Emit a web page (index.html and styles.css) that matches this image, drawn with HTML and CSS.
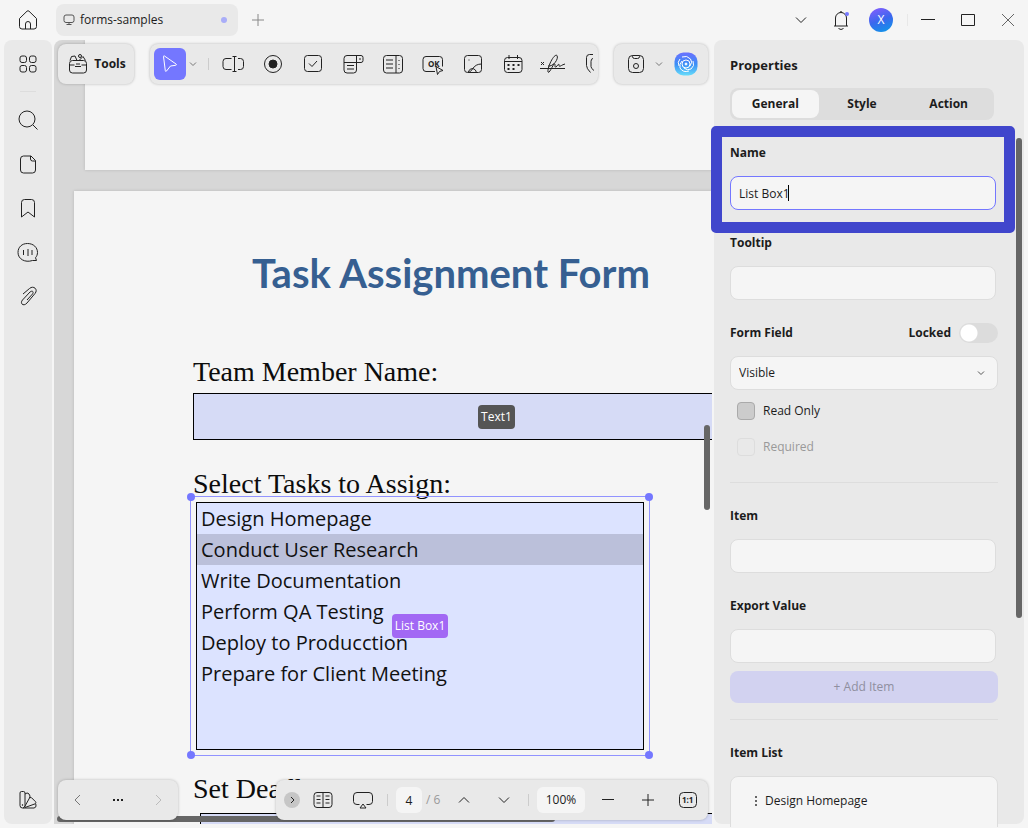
FILE: index.html
```html
<!doctype html>
<html lang="en">
	<head>
		<meta charset="utf-8">
		<title>forms-samples</title>
		<link rel="stylesheet" href="styles.css">
	</head>
	<body>
		<!-- Title bar -->
		<header>
			<button class="home" aria-label="Home"><svg width="24" height="24" viewBox="0 0 24 24"><path d="M3.5 10.5 11 3.2q1-.9 2 0l7.500 7.300v8q0 2.500-2.500 2.500H6q-2.500 0-2.500-2.500z"/><path d="M9.500 21v-5a2.500 2.500 0 0 1 5 0v5"/></svg></button>
			<div class="tab">
				<svg width="14" height="14" viewBox="0 0 14 14"><rect x="2" y="2" width="10" height="7.500" rx="2"/><path d="M7 9.500v2M4.500 11.500h5"/></svg>
				<span>forms-samples</span>
				<i class="dot"></i>
			</div>
			<button class="light" aria-label="New tab"><svg width="14" height="14" viewBox="0 0 14 14"><path d="M7 1v12M1 7h12"/></svg></button>
			<div class="windowbuttons">
				<button aria-label="More"><svg width="12" height="12" viewBox="0 0 12 12"><path d="m1 3.500 5 5 5-5"/></svg></button>
				<button aria-label="Notifications"><svg width="24" height="24" viewBox="0 0 24 24"><path d="M5 18h14M6.500 18v-8a5.500 5.500 0 0 1 11 0v8M11 4.500q1-2.500 2 0M9.500 20.500q2.500 2 5 0"/><circle class="notice" cx="18" cy="6" r="2"/></svg></button>
				<button aria-label="Account"><span class="avatar">X</span></button>
				<i class="line"></i>
				<button aria-label="Minimize"><svg width="14" height="14" viewBox="0 0 14 14"><path d="M0 6.500h14"/></svg></button>
				<button aria-label="Maximize"><svg width="14" height="14" viewBox="0 0 14 14"><rect x=".5" y="1.500" width="13" height="11"/></svg></button>
				<button class="close" aria-label="Close"><svg width="14" height="14" viewBox="0 0 14 14"><path d="m1 1 12 12M13 1 1 13"/></svg></button>
			</div>
		</header>
		<div id="app">
			<!-- Side menu -->
			<nav>
				<button aria-label="Menu"><svg width="24" height="24" viewBox="0 0 24 24"><rect x="4" y="4" width="6.500" height="6.500" rx="2"/><rect x="13.500" y="4" width="6.500" height="6.500" rx="2"/><rect x="4" y="13.500" width="6.500" height="6.500" rx="2"/><rect x="13.500" y="13.500" width="6.500" height="6.500" rx="2"/></svg></button>
				<hr>
				<button aria-label="Search"><svg width="24" height="24" viewBox="0 0 24 24"><circle cx="11" cy="11" r="8"/><path d="m17 17 4.500 4.500"/></svg></button>
				<button aria-label="Pages"><svg width="24" height="24" viewBox="0 0 24 24"><path d="M15 4H7.500q-3 0-3 3v11q0 3 3 3h9q3 0 3-3V8.500zM14.500 4v3q0 2 2 2h3"/></svg></button>
				<button aria-label="Bookmarks"><svg width="24" height="24" viewBox="0 0 24 24"><path d="M5.500 21V6.500q0-3 3-3h7q3 0 3 3V21L12 16z"/></svg></button>
				<button aria-label="Comments"><svg width="24" height="24" viewBox="0 0 24 24"><path d="M20.500 20.500h-4C9 23 2 19 2 12.500 2 7 6 3.500 11.500 3.500c6 0 10 4 10 9 0 2-.8 4-2 5.200zM7.500 10v5M12 9v7M16 10v5"/></svg></button>
				<button aria-label="Attachments"><svg width="24" height="24" viewBox="0 0 24 24"><path d="m7 10 6.500-5.500c4-3.500 9 1 5.500 5L11 19c-3.500 4-7.500.5-4.500-3l7.500-8c2.500-2 4 0 2.500 2L11 16"/></svg></button>
				<button class="last" aria-label="Theme"><svg width="24" height="24" viewBox="0 0 24 24"><path d="M4 5q0-1.500 1.500-1.500h2Q9 3.500 9 5v12.500q0 2.500-2.500 2.500T4 17.500zM9 6l2-1q1 0 2 1l1 2q0 1-.5 2L8.500 19M13.500 9.500l2 .2 4 4q.8 1 0 2L9 19.500M7 20h11q2-.5 2-2l-.2-2"/><circle cx="6.500" cy="17" r=".4"/></svg></button>
			</nav>
			<!-- Document -->
			<main>
				<article class="page previous"></article>
				<article class="page">
					<h1>Task Assignment Form</h1>
					<form>
						<label for="member">Team Member Name:</label>
						<div class="field">
							<input type="text" id="member">
							<span class="tag">Text1</span>
						</div>
						<label for="tasks">Select Tasks to Assign:</label>
						<div class="listbox">
							<select id="tasks" size="8">
								<option>Design Homepage</option>
								<option selected>Conduct User Research</option>
								<option>Write Documentation</option>
								<option>Perform QA Testing</option>
								<option>Deploy to Producction</option>
								<option>Prepare for Client Meeting</option>
							</select>
							<span class="tag purple">List Box1</span>
							<div class="selection"><i></i><i></i><i></i><i></i></div>
						</div>
						<label for="deadline">Set Deadline:</label>
						<div class="field deadline"><input type="text" id="deadline"></div>
					</form>
				</article>
				<i class="scroll vertical"></i>
				<i class="scroll horizontal"></i>

				<!-- Floating toolbars -->
				<div class="top">
					<div class="toolbar">
						<button class="tools"><svg width="24" height="24" viewBox="0 0 24 24"><rect x="3.500" y="8.500" width="17" height="12.500" rx="3"/><path d="M3.500 13h5M15.500 13h5M9 14.500h6M10 12h4M4 8.500l1.500-4 3.500-.5 2 4.500M13 8.500l4-4 2.500 4"/><circle cx="14" cy="4" r="1.500"/></svg>Tools</button>
					</div>
					<div class="toolbar fields">
						<button class="active" aria-label="Select"><svg width="24" height="24" viewBox="0 0 24 24"><path d="M5.500 4.500q0-1 1-.5L18 12q1 1-.3 1.300l-5.200.7L8.500 19q-1 1-1.200-.3z"/></svg></button>
						<button class="arrow" aria-label="Select options"><svg width="8" height="8" viewBox="0 0 8 8"><path d="m1 2.500 3 3 3-3"/></svg></button>
						<i class="line"></i>
						<button aria-label="Text field"><svg width="24" height="24" viewBox="0 0 24 24"><path d="M10.500 6.500H5q-3 0-3 3v5q0 3 3 3h5.500M17 6.500h2.500q3 0 3 3v5q0 3-3 3H17M13.500 5v14M11.500 4.500h4M11.500 19.500h4"/></svg></button>
						<button aria-label="Radio button"><svg width="24" height="24" viewBox="0 0 24 24"><circle cx="12" cy="12" r="8.500"/><circle class="fill" cx="12" cy="12" r="4"/></svg></button>
						<button aria-label="Check box"><svg width="24" height="24" viewBox="0 0 24 24"><rect x="3.500" y="3.500" width="17" height="16" rx="3"/><path d="m8 11.500 3 3 5-5.500"/></svg></button>
						<button aria-label="Dropdown"><svg width="24" height="24" viewBox="0 0 24 24"><path d="M15.500 10.500V18q0 3-3 3H6q-3 0-3-3V6.500q0-3 3-3h14q2 0 2 2v3q0 2-2 2H3M15.500 3.500v7M6 13.500h7M6 17h7M18 7h2"/></svg></button>
						<button aria-label="List box"><svg width="24" height="24" viewBox="0 0 24 24"><rect x="2.500" y="3.500" width="19" height="17.500" rx="3"/><path d="M15 3.500V21M5 8h7M5 12h7M5 16h7M18 8v1M18 12v1M18 16v1"/></svg></button>
						<button aria-label="Button"><svg width="24" height="24" viewBox="0 0 24 24"><path d="M14 19.500H5q-3 0-3-3v-9q0-3 3-3h13.500q3 0 3 3v7"/><text x="7" y="15">OK</text><path d="m15 14.500 7 4-3.500 1-2 3z"/></svg></button>
						<button aria-label="Image"><svg width="24" height="24" viewBox="0 0 24 24"><rect x="3.500" y="3.500" width="17" height="17" rx="3"/><path d="M20.500 12q-6 0-9 5-2 3-4 3.500M7 20q2-4 5-3.500 3 1 3.500 4M7.500 8h1"/></svg></button>
						<button aria-label="Date"><svg width="24" height="24" viewBox="0 0 24 24"><rect x="3.500" y="5.500" width="17.500" height="15" rx="3"/><path d="M3.500 9.500H21M8 3v4M16.500 3v4"/><path class="dots" d="M6.500 13h12M6.500 17h10"/></svg></button>
						<button aria-label="Signature"><svg width="28" height="24" viewBox="0 0 28 24"><path d="m2 10 3 3M5 10l-3 3M1 16.500h25M9 14c5 1 11-7 9-10.500C15 1 8 16 9 20c1 2 4-5 6-8 2-1 0 4 2 3 2-2 3-4 3-2 0 3 2 0 6-1"/></svg></button>
						<button aria-label="Attachment"><svg width="24" height="24" viewBox="0 0 24 24"><path d="M12 2.500H8.500q-3 0-3 3v8q0 3 4 7M12 6.500q-2 0-2 3v5q0 2 3 4"/></svg></button>
					</div>
					<div class="toolbar save">
						<button aria-label="Save"><svg width="24" height="24" viewBox="0 0 24 24"><rect x="4.500" y="3.500" width="15" height="17" rx="4"/><path d="M8.500 3.500v1q0 2 2 2h3q2 0 2-2v-1"/><circle cx="12" cy="14" r="2.500"/></svg></button>
						<button class="arrow" aria-label="Save options"><svg width="8" height="8" viewBox="0 0 8 8"><path d="m1 2.500 3 3 3-3"/></svg></button>
						<button aria-label="Assistant"><svg class="assistant" width="24" height="24" viewBox="0 0 24 24"><defs><linearGradient id="blue" x2="0" y2="1"><stop offset="0" stop-color="#6b70ff"/><stop offset=".5" stop-color="#3b8df5"/><stop offset="1" stop-color="#66dcfa"/></linearGradient></defs><rect width="23" height="23" x=".5" y=".5" rx="9" fill="url(#blue)"/><circle cx="12" cy="12" r="4"/><path d="M8 5q5-2 8.500 2Q19 10 16 14M19 9q2 5-2 8-4 2-7-1M15 19q-6 2-9-3-1-4 2-7M5 14q-2-4 1-7"/><circle class="center" cx="12" cy="12" r="1"/></svg></button>
					</div>
				</div>
				<div class="bottom">
					<div class="toolbar">
						<button class="gray" aria-label="Back"><svg width="12" height="12" viewBox="0 0 12 12"><path d="M8 1 3 6l5 5"/></svg></button>
						<button aria-label="More"><svg width="12" height="12" viewBox="0 0 12 12"><path class="more" d="M1 6h10"/></svg></button>
						<button class="faint" aria-label="Forward"><svg width="12" height="12" viewBox="0 0 12 12"><path d="m4 1 5 5-5 5"/></svg></button>
					</div>
					<div class="toolbar view">
						<button class="collapse" aria-label="Collapse"><svg width="8" height="8" viewBox="0 0 8 8"><path d="m3 1 3 3-3 3"/></svg></button>
						<button aria-label="Two pages"><svg width="24" height="24" viewBox="0 0 24 24"><rect x="3" y="4.500" width="18" height="15" rx="3"/><path d="M12 4.500v15M5.500 8h4M5.500 11.500h4M5.500 15h4M14.500 8h4M14.500 11.500h4M14.500 15h4"/></svg></button>
						<button aria-label="Present"><svg width="24" height="24" viewBox="0 0 24 24"><path d="M8.500 16.500H6q-3.500 0-3.500-3V8q0-3.500 3.500-3.500h12q3.500 0 3.500 3.500v5.500q0 3-3.500 3h-2.500M12 16l3 4H9z"/></svg></button>
						<i class="line"></i>
						<input type="text" value="4" aria-label="Page">
						<span class="total">/ 6</span>
						<button aria-label="Previous page"><svg width="12" height="12" viewBox="0 0 12 12"><path d="m1 8.500 5-5 5 5"/></svg></button>
						<button aria-label="Next page"><svg width="12" height="12" viewBox="0 0 12 12"><path d="m1 3.500 5 5 5-5"/></svg></button>
						<i class="line"></i>
						<button class="zoom">100%</button>
						<button aria-label="Zoom out"><svg width="12" height="12" viewBox="0 0 12 12"><path d="M0 5.500h12"/></svg></button>
						<button aria-label="Zoom in"><svg width="12" height="12" viewBox="0 0 12 12"><path d="M0 6h12M6 0v12"/></svg></button>
						<button aria-label="Actual size"><svg width="20" height="20" viewBox="0 0 20 20"><rect x="1.500" y="2.500" width="17" height="15" rx="4"/><text x="4" y="13">1:1</text></svg></button>
					</div>
				</div>
			</main>
			<!-- Properties -->
			<aside>
				<h2>Properties</h2>
				<div class="tabs">
					<button class="current">General</button>
					<button>Style</button>
					<button>Action</button>
				</div>
				<div class="properties">
					<section class="marked">
						<label for="name">Name</label>
						<div class="typing">
							<input type="text" id="name" value="List Box1">
							<i class="caret"></i>
						</div>
					</section>
					<section>
						<label for="tooltip">Tooltip</label>
						<input type="text" id="tooltip">
					</section>
					<section>
						<div class="row">
							<label for="visibility">Form Field</label>
							<label class="locked">Locked <input type="checkbox"></label>
						</div>
						<div class="dropdown">
							<select id="visibility"><option>Visible</option></select>
							<svg width="8" height="8" viewBox="0 0 8 8"><path d="m1 2.500 3 3 3-3"/></svg>
						</div>
						<div class="checks">
							<label><input type="checkbox">Read Only</label>
							<label class="disabled"><input type="checkbox" disabled>Required</label>
						</div>
					</section>
					<hr>
					<section>
						<label for="item">Item</label>
						<input type="text" id="item">
					</section>
					<section>
						<label for="value">Export Value</label>
						<input type="text" id="value">
						<button class="add" disabled>+ Add Item</button>
					</section>
					<hr>
					<section>
						<h3>Item List</h3>
						<ul>
							<li><svg width="4" height="12" viewBox="0 0 4 12"><path class="grip" d="M2 1v10"/></svg>Design Homepage</li>
						</ul>
					</section>
				</div>
				<i class="scroll"></i>
			</aside>
		</div>
	</body>
</html>
```
FILE: styles.css
```css
/* General */
* {
	box-sizing: border-box;
	margin: 0px;
	padding: 0px;
}
html, body {
	height: 100%;
}
body {
	display: flex;
	flex-direction: column;
	overflow: hidden;
	background: #f5f5f5;
	color: #1c1c1c;
	font-family: "Open Sans", sans-serif;
	font-size: 12px;
	line-height: 20px;
}
button, input, select {
	border: none;
	background: none;
	color: inherit;
	font: inherit;
	outline: none;
}
button {
	display: flex;
	flex: none;
	align-items: center;
	justify-content: center;
	width: 40px;
	height: 32px;
}
svg {
	flex: none;
	fill: none;
	stroke: #222;
	stroke-width: 1px;
	stroke-linejoin: round;
}
svg text {
	fill: #222;
	stroke: none;
	font-size: 8px;
	font-weight: bold;
}
.line {
	flex: none;
	width: 1px;
	height: 12px;
	background: #ccc;
}
.scroll {
	position: absolute;
	width: 6px;
	border-radius: 3px;
	background: #666;
}
/* Title bar */
header {
	display: flex;
	flex: none;
	align-items: center;
	height: 40px;
	padding-left: 8px;
}
.tab {
	display: flex;
	align-items: center;
	gap: 4px;
	width: 182px;
	height: 32px;
	margin-left: 8px;
	padding: 0px 11px 0px 6px;
	border-radius: 8px;
	background: #e9e9e9;
}
.tab svg {
	stroke: #555;
}
.dot {
	width: 6px;
	height: 6px;
	margin-left: auto;
	border-radius: 50%;
	background: #a9adf8;
}
.light svg {
	stroke: #888;
}
.windowbuttons {
	display: flex;
	align-items: center;
	margin-left: auto;
}
.windowbuttons .line {
	margin: 0px 0px 0px 6px;
	background: #e8e8e8;
}
.close svg {
	stroke: #666;
}
.notice {
	fill: #7477ff;
	stroke: none;
}
.avatar {
	width: 24px;
	height: 24px;
	border-radius: 50%;
	background: linear-gradient(160deg, #8a5cff, #3b68ee 50%, #0a9be8);
	color: white;
	line-height: 24px;
	text-align: center;
}
#app {
	display: flex;
	flex: 1;
	min-height: 0px;
	padding: 0px 4px 4px;
}
/* Side menu */
nav {
	display: flex;
	flex: none;
	flex-direction: column;
	width: 48px;
	padding: 2px 0px;
	border-radius: 8px;
	background: #e9e9e9;
}
nav button {
	width: 48px;
	height: 44px;
}
nav hr {
	width: 16px;
	margin: 5px auto 6px;
	border: none;
	border-top: 1px solid #ddd;
}
nav .last {
	margin-top: auto;
}
/* Document */
main {
	position: relative;
	flex: 1;
	min-width: 0px;
	margin: 0px 2px;
	overflow: hidden;
	border-top-left-radius: 8px;
	background: #d7d7d7;
}
.page {
	width: 754px;
	height: 900px;
	margin-left: 20px;
	padding-top: 56px;
	background: #f5f5f5;
	box-shadow: 0px 0px 3px rgba(0,0,0,0.15);
}
.previous {
	height: 130px;
	margin: 0px 0px 21px 31px;
}
h1 {
	color: #365f91;
	font-family: Lato, sans-serif;
	font-size: 40px;
	line-height: 52px;
	text-align: center;
}
form {
	padding: 57px 28px 0px 119px;
}
form > label {
	display: block;
	color: #0c0c0c;
	font-family: "Liberation Serif", serif;
	font-size: 28px;
	line-height: 32px;
}
.field {
	display: flex;
	position: relative;
	align-items: center;
	justify-content: center;
	height: 47px;
	margin: 5px 0px 28px;
}
.field input {
	width: 100%;
	height: 100%;
	border: 1px solid black;
	background: #d6dbf6;
}
.tag {
	position: absolute;
	height: 24px;
	padding: 0px 3px;
	border-radius: 4px;
	background: #555;
	color: white;
	font-size: 12px;
	line-height: 24px;
}
.purple {
	background: #a268f4;
}
.listbox {
	display: flex;
	position: relative;
	align-items: center;
	justify-content: center;
	width: 448px;
	height: 248px;
	margin: 2px 0px 23px 3px;
}
.listbox select {
	width: 100%;
	height: 100%;
	overflow: hidden;
	border: 1px solid black;
	border-radius: 0px;
	background: #dce3ff;
	font-size: 20px;
}
.listbox option {
	height: 31px;
	padding: 2px 4px 0px;
	color: #111;
	line-height: 29px;
}
.listbox option:checked {
	background: #bbc0da linear-gradient(#bbc0da, #bbc0da);
	color: #111;
}
.selection {
	position: absolute;
	inset: -6px;
	border: 1px solid #9193ff;
	pointer-events: none;
}
.selection i {
	position: absolute;
	width: 8px;
	height: 8px;
	border-radius: 50%;
	background: #7477ff;
}
.selection i:nth-child(odd) {
	left: -4px;
}
.selection i:nth-child(even) {
	right: -4px;
}
.selection i:nth-child(-n+2) {
	top: -4px;
}
.selection i:nth-child(n+3) {
	bottom: -4px;
}
.deadline {
	margin: 8px 0px 0px 7px;
}
.vertical {
	top: 385px;
	right: 2px;
	height: 85px;
}
.horizontal {
	bottom: 2px;
	left: 3px;
	width: 498px;
	height: 6px;
}
/* Floating toolbars */
.top, .bottom {
	display: flex;
	position: absolute;
	right: 4px;
	left: 4px;
}
.top {
	top: 4px;
	gap: 16px;
}
.bottom {
	bottom: 4px;
	justify-content: space-between;
}
.toolbar {
	display: flex;
	flex: none;
	align-items: center;
	height: 40px;
	border-radius: 8px;
	background: #e9e9e9;
	box-shadow: 0px 0px 3px rgba(0,0,0,0.25);
}
.tools {
	gap: 4px;
	width: 76px;
	font-weight: bold;
}
.fields {
	flex: 1;
	min-width: 0px;
	padding-left: 4px;
	overflow: hidden;
}
.fields .line {
	margin: 0px 4px 0px 8px;
}
.active {
	width: 32px;
	border-radius: 6px;
	background: #7477ff;
}
.active svg {
	stroke: white;
}
.arrow {
	width: 14px;
}
.arrow svg, .gray svg {
	stroke: #777;
}
.faint svg {
	stroke: #bbb;
}
.fill {
	fill: #222;
}
.dots {
	stroke-width: 2px;
	stroke-dasharray: 2 3;
}
.more, .grip {
	stroke-width: 2px;
	stroke-dasharray: 2 2;
}
.save {
	width: 94px;
	padding-left: 2px;
}
.save .arrow {
	margin-left: -4px;
}
.assistant {
	stroke: white;
}
.assistant rect {
	stroke: none;
}
.center {
	fill: white;
}
.view .collapse {
	width: 16px;
	height: 16px;
	margin: 0px 3px 0px 8px;
	border-radius: 50%;
	background: #c6c6c6;
}
.view .line {
	margin: 0px 8px 0px 4px;
}
.view input {
	width: 26px;
	height: 26px;
	border-radius: 6px;
	background: #f5f5f5;
	text-align: center;
}
.total {
	width: 22px;
	padding-left: 4px;
	color: #999;
}
.view .zoom {
	width: 48px;
	height: 26px;
	margin-right: 3px;
	border-radius: 6px;
	background: #f5f5f5;
}
/* Properties */
aside {
	display: flex;
	position: relative;
	flex: none;
	flex-direction: column;
	width: 310px;
	padding: 15px 26px 0px 16px;
	overflow: clip;
	overflow-clip-margin: 3px;
	border-radius: 8px;
	background: #e9e9e9;
}
h2 {
	font-size: 13px;
	line-height: 20px;
}
h3, section > label, .row label {
	font-size: 12px;
	font-weight: bold;
	line-height: 20px;
}
.tabs {
	display: flex;
	flex: none;
	height: 32px;
	margin: 13px 4px 23px 0px;
	padding: 2px;
	border-radius: 8px;
	background: #ddd;
}
.tabs button {
	flex: 1;
	height: 28px;
	border-radius: 8px;
	font-weight: bold;
}
.tabs .current {
	background: #f5f5f5;
}
.properties {
	flex: 1;
	min-height: 0px;
}
section {
	display: flex;
	position: relative;
	flex-direction: column;
	gap: 13px;
	margin-bottom: 23px;
}
/* Blue frame round the name */
.marked::before {
	content: "";
	position: absolute;
	inset: -17px -17px -23px -19px;
	border: 11px solid #4046cc;
	border-radius: 5px;
	pointer-events: none;
}
section input[type=text], .dropdown select {
	height: 34px;
	margin-right: 2px;
	padding: 0px 8px;
	border: 1px solid #ddd;
	border-radius: 8px;
	background: #f5f5f5;
}
.typing, .dropdown {
	display: flex;
	position: relative;
	align-items: center;
}
.typing input[type=text] {
	flex: 1;
	min-width: 0px;
	border-color: #7477ff;
}
.caret {
	position: absolute;
	left: 58px;
	width: 1px;
	height: 16px;
	background: black;
}
.row {
	display: flex;
	align-items: center;
	justify-content: space-between;
	height: 20px;
}
.locked {
	display: flex;
	align-items: center;
	gap: 8px;
}
.locked input {
	appearance: none;
	width: 39px;
	height: 20px;
	border-radius: 10px;
	background: radial-gradient(circle at 10px 10px, white 8px, #dcdcdc 9px);
}
.dropdown select {
	flex: 1;
	margin: 0px;
	appearance: none;
}
.dropdown svg {
	position: absolute;
	right: 13px;
	stroke: #555;
}
.checks {
	margin: -10px 0px -6px;
}
.checks label {
	display: flex;
	align-items: center;
	gap: 8px;
	height: 36px;
	padding-left: 7px;
}
.checks input {
	appearance: none;
	width: 18px;
	height: 18px;
	border: 1px solid #aaa;
	border-radius: 4px;
	background: #ccc;
}
.checks .disabled {
	color: #999;
}
.disabled input {
	border-color: #ddd;
	background: #e9e9e9;
}
.properties hr {
	margin-bottom: 23px;
	border: none;
	border-top: 1px solid #ddd;
}
.add {
	width: 100%;
	margin: -5px 0px -7px;
	border-radius: 8px;
	background: #d2d2f0;
	color: #8f8f9f;
}
ul {
	height: 140px;
	padding: 14px 23px;
	border: 1px solid #ddd;
	border-radius: 8px;
	background: #f5f5f5;
	list-style-type: none;
}
li {
	display: flex;
	align-items: center;
	gap: 7px;
}
.grip {
	stroke: #666;
}
aside .scroll {
	top: 98px;
	right: 2px;
	height: 480px;
}
```
